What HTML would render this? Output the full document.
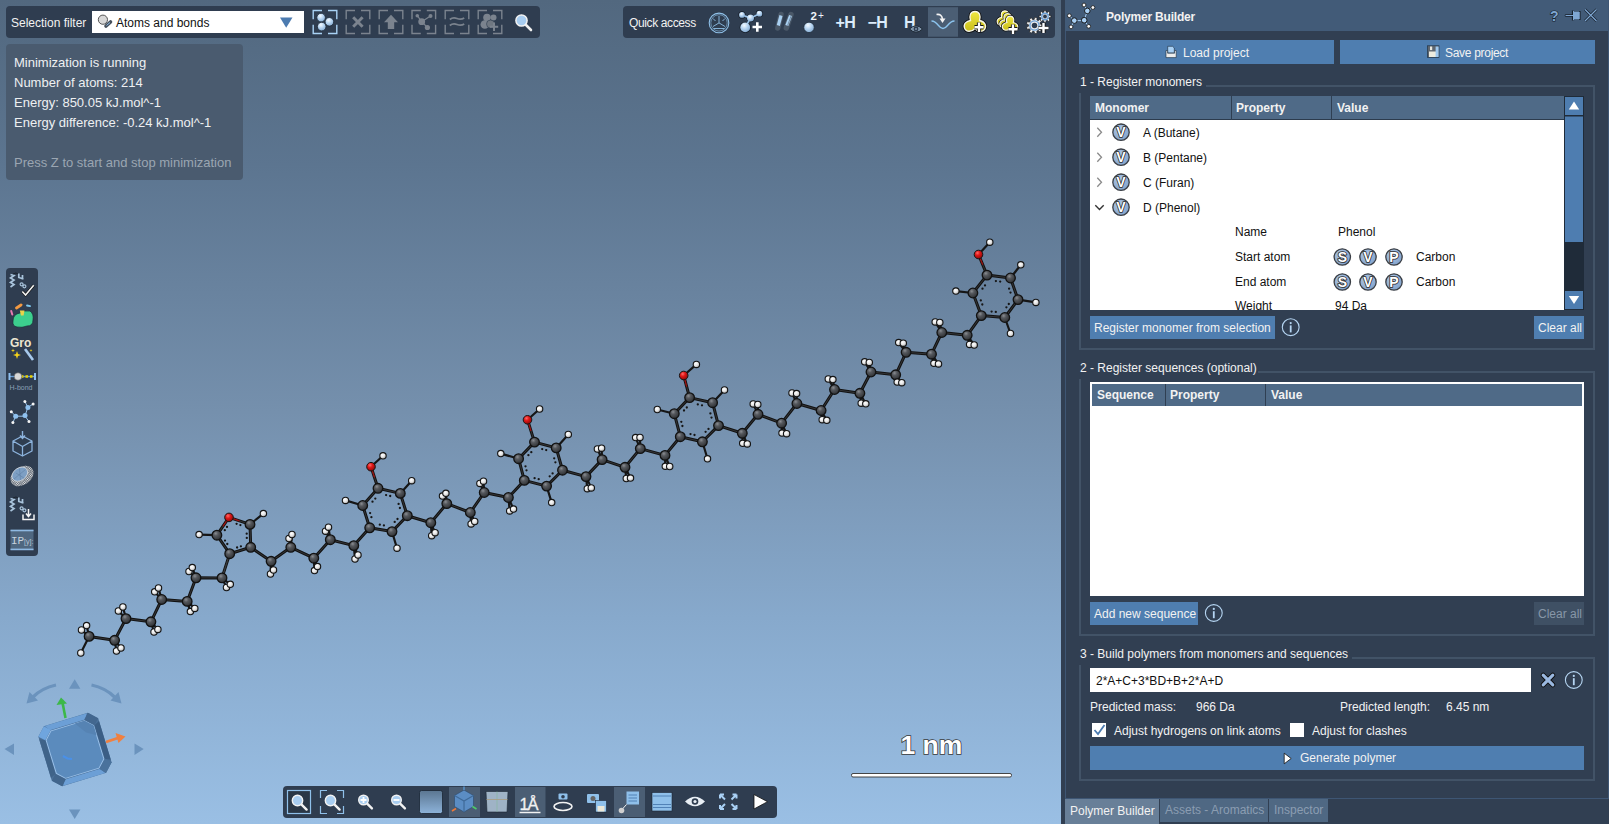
<!DOCTYPE html>
<html><head><meta charset="utf-8">
<style>
html,body{margin:0;padding:0}
body{width:1609px;height:824px;overflow:hidden;position:relative;font-family:"Liberation Sans",sans-serif;background:#313f52}
.a{position:absolute}
.t{position:absolute;white-space:pre;line-height:1}
#vp{left:0;top:0;width:1061px;height:824px;background:linear-gradient(#52687f 0%,#5c7590 20%,#7590ad 50%,#87a9cc 75%,#9abfe4 100%);overflow:hidden}
.tb{background:#2f3d50;border-radius:4px}
.w{color:#f2f2f2}
.btn{background:#4f7eb0}
.hdr{background:#4f6a87}
.frm{border:2px solid #425367}
</style></head><body>
<div id="vp" class="a">
<svg class="a" style="left:0;top:0" width="1061" height="824" viewBox="0 0 1061 824">
<defs><radialGradient id="gC" cx="0.38" cy="0.32" r="0.7"><stop offset="0" stop-color="#8a8d92"/><stop offset="0.35" stop-color="#55585d"/><stop offset="1" stop-color="#2e3033"/></radialGradient><radialGradient id="gH" cx="0.4" cy="0.35" r="0.7"><stop offset="0" stop-color="#ffffff"/><stop offset="0.5" stop-color="#e6e6e6"/><stop offset="1" stop-color="#9a9a9a"/></radialGradient><radialGradient id="gO" cx="0.38" cy="0.32" r="0.7"><stop offset="0" stop-color="#ff6a6a"/><stop offset="0.4" stop-color="#e01818"/><stop offset="1" stop-color="#8a0808"/></radialGradient></defs>
<path d="M222.0 577.9L229.7 553.7M89.1 636.4L114.6 640.3M114.6 640.3L126.0 618.6M126.0 618.6L150.9 621.8M150.9 621.8L161.7 599.5M161.7 599.5L187.2 601.4M187.2 601.4L196.0 577.8M196.0 577.8L222.0 577.9M222.0 577.9L229.7 553.7M229.7 553.7L216.9 535.2M216.9 535.2L229.0 517.4M229.0 517.4L250.0 524.4M250.0 524.4L250.7 547.3M250.7 547.3L229.7 553.7M369.7 527.8L362.7 505.5M362.7 505.5L378.0 488.3M378.0 488.3L400.3 493.4M400.3 493.4L407.3 515.7M407.3 515.7L392.0 531.6M392.0 531.6L369.7 527.8M524.3 480.4L518.6 458.7M518.6 458.7L534.5 442.1M534.5 442.1L556.2 447.9M556.2 447.9L562.5 470.2M562.5 470.2L546.6 486.1M546.6 486.1L524.3 480.4M680.3 436.7L674.3 413.7M674.3 413.7L689.6 397.6M689.6 397.6L712.6 402.7M712.6 402.7L718.5 425.6M718.5 425.6L702.4 441.8M702.4 441.8L680.3 436.7M981.3 315.6L972.9 293.0M972.9 293.0L987.0 275.1M987.0 275.1L1010.5 278.0M1010.5 278.0L1018.0 299.6M1018.0 299.6L1004.8 317.5M1004.8 317.5L981.3 315.6M250.7 547.3L271.1 561.3M271.1 561.3L290.8 547.3M290.8 547.3L313.8 558.2M313.8 558.2L330.3 539.7M330.3 539.7L353.8 545.6M353.8 545.6L369.7 527.8M407.3 515.7L430.8 522.7M430.8 522.7L446.8 503.6M446.8 503.6L470.3 512.5M470.3 512.5L484.2 492.5M484.2 492.5L508.4 497.5M508.4 497.5L524.3 480.4M562.5 470.2L586.0 476.6M586.0 476.6L602.1 459.6M602.1 459.6L625.0 467.3M625.0 467.3L640.3 448.6M640.3 448.6L665.0 455.4M665.0 455.4L680.3 436.7M718.5 425.6L742.3 433.3M742.3 433.3L758.0 414.3M758.0 414.3L781.6 423.2M781.6 423.2L796.9 403.5M796.9 403.5L821.1 410.5M821.1 410.5L834.5 389.5M834.5 389.5L859.9 393.3M859.9 393.3L871.0 372.0M871.0 372.0L895.7 374.8M895.7 374.8L906.1 352.3M906.1 352.3L931.5 354.2M931.5 354.2L941.8 332.5M941.8 332.5L967.2 335.3M967.2 335.3L981.3 315.6M378.0 488.3L371.0 466.7M534.5 442.1L527.5 419.8M689.6 397.6L683.7 375.5M987.0 275.1L978.5 254.5" stroke="#121212" stroke-width="3" fill="none"/>
<path d="M222.0 577.9L229.7 553.7M89.1 636.4L114.6 640.3M114.6 640.3L126.0 618.6M126.0 618.6L150.9 621.8M150.9 621.8L161.7 599.5M161.7 599.5L187.2 601.4M187.2 601.4L196.0 577.8M196.0 577.8L222.0 577.9M222.0 577.9L229.7 553.7M229.7 553.7L216.9 535.2M216.9 535.2L229.0 517.4M229.0 517.4L250.0 524.4M250.0 524.4L250.7 547.3M250.7 547.3L229.7 553.7M369.7 527.8L362.7 505.5M362.7 505.5L378.0 488.3M378.0 488.3L400.3 493.4M400.3 493.4L407.3 515.7M407.3 515.7L392.0 531.6M392.0 531.6L369.7 527.8M524.3 480.4L518.6 458.7M518.6 458.7L534.5 442.1M534.5 442.1L556.2 447.9M556.2 447.9L562.5 470.2M562.5 470.2L546.6 486.1M546.6 486.1L524.3 480.4M680.3 436.7L674.3 413.7M674.3 413.7L689.6 397.6M689.6 397.6L712.6 402.7M712.6 402.7L718.5 425.6M718.5 425.6L702.4 441.8M702.4 441.8L680.3 436.7M981.3 315.6L972.9 293.0M972.9 293.0L987.0 275.1M987.0 275.1L1010.5 278.0M1010.5 278.0L1018.0 299.6M1018.0 299.6L1004.8 317.5M1004.8 317.5L981.3 315.6M250.7 547.3L271.1 561.3M271.1 561.3L290.8 547.3M290.8 547.3L313.8 558.2M313.8 558.2L330.3 539.7M330.3 539.7L353.8 545.6M353.8 545.6L369.7 527.8M407.3 515.7L430.8 522.7M430.8 522.7L446.8 503.6M446.8 503.6L470.3 512.5M470.3 512.5L484.2 492.5M484.2 492.5L508.4 497.5M508.4 497.5L524.3 480.4M562.5 470.2L586.0 476.6M586.0 476.6L602.1 459.6M602.1 459.6L625.0 467.3M625.0 467.3L640.3 448.6M640.3 448.6L665.0 455.4M665.0 455.4L680.3 436.7M718.5 425.6L742.3 433.3M742.3 433.3L758.0 414.3M758.0 414.3L781.6 423.2M781.6 423.2L796.9 403.5M796.9 403.5L821.1 410.5M821.1 410.5L834.5 389.5M834.5 389.5L859.9 393.3M859.9 393.3L871.0 372.0M871.0 372.0L895.7 374.8M895.7 374.8L906.1 352.3M906.1 352.3L931.5 354.2M931.5 354.2L941.8 332.5M941.8 332.5L967.2 335.3M967.2 335.3L981.3 315.6M378.0 488.3L371.0 466.7M534.5 442.1L527.5 419.8M689.6 397.6L683.7 375.5M987.0 275.1L978.5 254.5" stroke="#3c3e40" stroke-width="0.8" fill="none"/>
<path d="M89.1 636.4L81.5 630.0M89.1 636.4L86.6 625.6M89.1 636.4L80.8 653.0M114.6 640.3L116.5 651.0M114.6 640.3L121.0 648.0M126.0 618.6L118.4 611.0M126.0 618.6L122.9 607.0M150.9 621.8L154.0 632.0M150.9 621.8L157.9 629.4M161.7 599.5L154.7 591.8M161.7 599.5L158.5 588.0M187.2 601.4L190.4 611.6M187.2 601.4L194.8 608.4M196.0 577.8L189.0 571.5M196.0 577.8L192.3 567.6M222.0 577.9L226.5 587.5M222.0 577.9L230.3 584.3M216.9 535.2L199.1 534.6M250.0 524.4L263.4 513.6M271.1 561.3L270.5 574.0M271.1 561.3L273.5 570.0M290.8 547.3L289.0 538.5M290.8 547.3L292.0 534.5M313.8 558.2L314.5 570.6M313.8 558.2L317.5 566.6M330.3 539.7L325.5 531.2M330.3 539.7L328.5 527.2M353.8 545.6L355.0 559.0M353.8 545.6L358.0 555.0M362.7 505.5L345.5 500.4M371.0 466.7L383.0 455.8M400.3 493.4L411.7 480.7M392.0 531.6L397.0 548.2M430.8 522.7L431.7 535.7M430.8 522.7L435.1 532.7M446.8 503.6L442.5 496.1M446.8 503.6L445.9 493.3M470.3 512.5L471.1 523.9M470.3 512.5L474.7 521.5M484.2 492.5L479.9 483.4M484.2 492.5L483.5 481.2M508.4 497.5L509.7 510.9M508.4 497.5L513.5 509.1M518.6 458.7L500.8 453.6M527.5 419.8L539.6 409.0M556.2 447.9L568.3 434.5M546.6 486.1L551.7 502.6M586.0 476.6L587.3 488.7M586.0 476.6L591.3 487.9M602.1 459.6L597.4 449.0M602.1 459.6L601.6 448.2M625.0 467.3L626.3 478.5M625.0 467.3L630.5 478.1M640.3 448.6L635.6 437.6M640.3 448.6L640.0 437.4M665.0 455.4L665.3 466.3M665.0 455.4L669.7 466.5M674.3 413.7L657.3 409.5M683.7 375.5L696.4 364.4M712.6 402.7L724.5 390.0M702.4 441.8L707.5 458.8M742.3 433.3L742.7 443.3M742.3 433.3L747.3 443.9M758.0 414.3L753.2 403.9M758.0 414.3L757.8 404.5M781.6 423.2L782.0 433.1M781.6 423.2L786.6 433.7M796.9 403.5L792.0 393.0M796.9 403.5L796.6 393.6M821.1 410.5L822.2 419.7M821.1 410.5L826.8 420.3M834.5 389.5L828.3 379.0M834.5 389.5L832.9 379.6M859.9 393.3L861.2 403.2M859.9 393.3L865.8 403.8M871.0 372.0L864.7 361.8M871.0 372.0L869.3 362.4M895.7 374.8L897.2 382.1M895.7 374.8L901.8 382.7M906.1 352.3L898.7 342.6M906.1 352.3L903.3 343.2M931.5 354.2L933.9 363.3M931.5 354.2L938.5 363.9M941.8 332.5L935.2 321.9M941.8 332.5L939.8 322.5M967.2 335.3L969.6 344.4M967.2 335.3L974.2 345.0M972.9 293.0L955.9 291.1M978.5 254.5L989.8 242.2M1010.5 278.0L1020.8 264.8M1018.0 299.6L1035.9 302.4M1004.8 317.5L1010.5 333.5" stroke="#161616" stroke-width="2.2" fill="none"/>
<path d="M371.0 466.7L374.5 477.5M527.5 419.8L531.0 431.0M683.7 375.5L686.7 386.6M978.5 254.5L982.8 264.8M229.0 517.4L222.9 526.3M229.0 517.4L239.5 520.9" stroke="#a01010" stroke-width="1.2" fill="none"/>
<path d="M227.3 544.0l0.01 0M225.0 540.6l0.01 0M224.8 530.2l0.01 0M227.0 526.9l0.01 0M236.6 523.8l0.01 0M240.4 525.1l0.01 0M246.7 533.7l0.01 0M246.8 537.9l0.01 0M240.9 546.3l0.01 0M237.1 547.5l0.01 0M371.4 517.2l0.01 0M370.1 513.1l0.01 0M372.5 501.7l0.01 0M375.3 498.6l0.01 0M386.1 495.1l0.01 0M390.2 496.0l0.01 0M398.6 503.9l0.01 0M399.9 508.0l0.01 0M397.5 519.0l0.01 0M394.7 521.9l0.01 0M383.9 525.4l0.01 0M379.8 524.7l0.01 0M526.5 470.3l0.01 0M525.5 466.3l0.01 0M528.4 455.2l0.01 0M531.3 452.2l0.01 0M542.2 449.1l0.01 0M546.2 450.1l0.01 0M554.2 458.3l0.01 0M555.4 462.3l0.01 0M552.6 473.4l0.01 0M549.7 476.3l0.01 0M538.7 479.2l0.01 0M534.6 478.2l0.01 0M682.4 426.0l0.01 0M681.3 421.8l0.01 0M684.0 410.5l0.01 0M686.8 407.5l0.01 0M697.8 404.4l0.01 0M702.0 405.3l0.01 0M710.4 413.4l0.01 0M711.5 417.6l0.01 0M708.5 428.9l0.01 0M705.6 431.8l0.01 0M694.5 435.0l0.01 0M690.5 434.1l0.01 0M982.3 304.5l0.01 0M980.8 300.4l0.01 0M982.5 288.7l0.01 0M985.0 285.4l0.01 0M995.9 281.1l0.01 0M1000.2 281.6l0.01 0M1009.1 288.7l0.01 0M1010.5 292.6l0.01 0M1008.8 304.0l0.01 0M1006.4 307.3l0.01 0M995.8 311.9l0.01 0M991.6 311.6l0.01 0" stroke="#161616" stroke-width="2.3" stroke-linecap="round" fill="none"/>
<circle cx="89.1" cy="636.4" r="4.8" fill="url(#gC)" stroke="#121212" stroke-width="1.3"/>
<circle cx="114.6" cy="640.3" r="4.8" fill="url(#gC)" stroke="#121212" stroke-width="1.3"/>
<circle cx="126.0" cy="618.6" r="4.8" fill="url(#gC)" stroke="#121212" stroke-width="1.3"/>
<circle cx="150.9" cy="621.8" r="4.8" fill="url(#gC)" stroke="#121212" stroke-width="1.3"/>
<circle cx="161.7" cy="599.5" r="4.8" fill="url(#gC)" stroke="#121212" stroke-width="1.3"/>
<circle cx="187.2" cy="601.4" r="4.8" fill="url(#gC)" stroke="#121212" stroke-width="1.3"/>
<circle cx="196.0" cy="577.8" r="4.8" fill="url(#gC)" stroke="#121212" stroke-width="1.3"/>
<circle cx="222.0" cy="577.9" r="4.8" fill="url(#gC)" stroke="#121212" stroke-width="1.3"/>
<circle cx="229.7" cy="553.7" r="4.8" fill="url(#gC)" stroke="#121212" stroke-width="1.3"/>
<circle cx="216.9" cy="535.2" r="4.8" fill="url(#gC)" stroke="#121212" stroke-width="1.3"/>
<circle cx="250.0" cy="524.4" r="4.8" fill="url(#gC)" stroke="#121212" stroke-width="1.3"/>
<circle cx="250.7" cy="547.3" r="4.8" fill="url(#gC)" stroke="#121212" stroke-width="1.3"/>
<circle cx="271.1" cy="561.3" r="4.8" fill="url(#gC)" stroke="#121212" stroke-width="1.3"/>
<circle cx="290.8" cy="547.3" r="4.8" fill="url(#gC)" stroke="#121212" stroke-width="1.3"/>
<circle cx="313.8" cy="558.2" r="4.8" fill="url(#gC)" stroke="#121212" stroke-width="1.3"/>
<circle cx="330.3" cy="539.7" r="4.8" fill="url(#gC)" stroke="#121212" stroke-width="1.3"/>
<circle cx="353.8" cy="545.6" r="4.8" fill="url(#gC)" stroke="#121212" stroke-width="1.3"/>
<circle cx="369.7" cy="527.8" r="4.8" fill="url(#gC)" stroke="#121212" stroke-width="1.3"/>
<circle cx="362.7" cy="505.5" r="4.8" fill="url(#gC)" stroke="#121212" stroke-width="1.3"/>
<circle cx="378.0" cy="488.3" r="4.8" fill="url(#gC)" stroke="#121212" stroke-width="1.3"/>
<circle cx="400.3" cy="493.4" r="4.8" fill="url(#gC)" stroke="#121212" stroke-width="1.3"/>
<circle cx="407.3" cy="515.7" r="4.8" fill="url(#gC)" stroke="#121212" stroke-width="1.3"/>
<circle cx="392.0" cy="531.6" r="4.8" fill="url(#gC)" stroke="#121212" stroke-width="1.3"/>
<circle cx="430.8" cy="522.7" r="4.8" fill="url(#gC)" stroke="#121212" stroke-width="1.3"/>
<circle cx="446.8" cy="503.6" r="4.8" fill="url(#gC)" stroke="#121212" stroke-width="1.3"/>
<circle cx="470.3" cy="512.5" r="4.8" fill="url(#gC)" stroke="#121212" stroke-width="1.3"/>
<circle cx="484.2" cy="492.5" r="4.8" fill="url(#gC)" stroke="#121212" stroke-width="1.3"/>
<circle cx="508.4" cy="497.5" r="4.8" fill="url(#gC)" stroke="#121212" stroke-width="1.3"/>
<circle cx="524.3" cy="480.4" r="4.8" fill="url(#gC)" stroke="#121212" stroke-width="1.3"/>
<circle cx="518.6" cy="458.7" r="4.8" fill="url(#gC)" stroke="#121212" stroke-width="1.3"/>
<circle cx="534.5" cy="442.1" r="4.8" fill="url(#gC)" stroke="#121212" stroke-width="1.3"/>
<circle cx="556.2" cy="447.9" r="4.8" fill="url(#gC)" stroke="#121212" stroke-width="1.3"/>
<circle cx="562.5" cy="470.2" r="4.8" fill="url(#gC)" stroke="#121212" stroke-width="1.3"/>
<circle cx="546.6" cy="486.1" r="4.8" fill="url(#gC)" stroke="#121212" stroke-width="1.3"/>
<circle cx="586.0" cy="476.6" r="4.8" fill="url(#gC)" stroke="#121212" stroke-width="1.3"/>
<circle cx="602.1" cy="459.6" r="4.8" fill="url(#gC)" stroke="#121212" stroke-width="1.3"/>
<circle cx="625.0" cy="467.3" r="4.8" fill="url(#gC)" stroke="#121212" stroke-width="1.3"/>
<circle cx="640.3" cy="448.6" r="4.8" fill="url(#gC)" stroke="#121212" stroke-width="1.3"/>
<circle cx="665.0" cy="455.4" r="4.8" fill="url(#gC)" stroke="#121212" stroke-width="1.3"/>
<circle cx="680.3" cy="436.7" r="4.8" fill="url(#gC)" stroke="#121212" stroke-width="1.3"/>
<circle cx="674.3" cy="413.7" r="4.8" fill="url(#gC)" stroke="#121212" stroke-width="1.3"/>
<circle cx="689.6" cy="397.6" r="4.8" fill="url(#gC)" stroke="#121212" stroke-width="1.3"/>
<circle cx="712.6" cy="402.7" r="4.8" fill="url(#gC)" stroke="#121212" stroke-width="1.3"/>
<circle cx="718.5" cy="425.6" r="4.8" fill="url(#gC)" stroke="#121212" stroke-width="1.3"/>
<circle cx="702.4" cy="441.8" r="4.8" fill="url(#gC)" stroke="#121212" stroke-width="1.3"/>
<circle cx="742.3" cy="433.3" r="4.8" fill="url(#gC)" stroke="#121212" stroke-width="1.3"/>
<circle cx="758.0" cy="414.3" r="4.8" fill="url(#gC)" stroke="#121212" stroke-width="1.3"/>
<circle cx="781.6" cy="423.2" r="4.8" fill="url(#gC)" stroke="#121212" stroke-width="1.3"/>
<circle cx="796.9" cy="403.5" r="4.8" fill="url(#gC)" stroke="#121212" stroke-width="1.3"/>
<circle cx="821.1" cy="410.5" r="4.8" fill="url(#gC)" stroke="#121212" stroke-width="1.3"/>
<circle cx="834.5" cy="389.5" r="4.8" fill="url(#gC)" stroke="#121212" stroke-width="1.3"/>
<circle cx="859.9" cy="393.3" r="4.8" fill="url(#gC)" stroke="#121212" stroke-width="1.3"/>
<circle cx="871.0" cy="372.0" r="4.8" fill="url(#gC)" stroke="#121212" stroke-width="1.3"/>
<circle cx="895.7" cy="374.8" r="4.8" fill="url(#gC)" stroke="#121212" stroke-width="1.3"/>
<circle cx="906.1" cy="352.3" r="4.8" fill="url(#gC)" stroke="#121212" stroke-width="1.3"/>
<circle cx="931.5" cy="354.2" r="4.8" fill="url(#gC)" stroke="#121212" stroke-width="1.3"/>
<circle cx="941.8" cy="332.5" r="4.8" fill="url(#gC)" stroke="#121212" stroke-width="1.3"/>
<circle cx="967.2" cy="335.3" r="4.8" fill="url(#gC)" stroke="#121212" stroke-width="1.3"/>
<circle cx="981.3" cy="315.6" r="4.8" fill="url(#gC)" stroke="#121212" stroke-width="1.3"/>
<circle cx="972.9" cy="293.0" r="4.8" fill="url(#gC)" stroke="#121212" stroke-width="1.3"/>
<circle cx="987.0" cy="275.1" r="4.8" fill="url(#gC)" stroke="#121212" stroke-width="1.3"/>
<circle cx="1010.5" cy="278.0" r="4.8" fill="url(#gC)" stroke="#121212" stroke-width="1.3"/>
<circle cx="1018.0" cy="299.6" r="4.8" fill="url(#gC)" stroke="#121212" stroke-width="1.3"/>
<circle cx="1004.8" cy="317.5" r="4.8" fill="url(#gC)" stroke="#121212" stroke-width="1.3"/>
<circle cx="229.0" cy="517.4" r="4.3" fill="url(#gO)" stroke="#151515" stroke-width="1"/>
<circle cx="371.0" cy="466.7" r="4.3" fill="url(#gO)" stroke="#151515" stroke-width="1"/>
<circle cx="527.5" cy="419.8" r="4.3" fill="url(#gO)" stroke="#151515" stroke-width="1"/>
<circle cx="683.7" cy="375.5" r="4.3" fill="url(#gO)" stroke="#151515" stroke-width="1"/>
<circle cx="978.5" cy="254.5" r="4.3" fill="url(#gO)" stroke="#151515" stroke-width="1"/>
<circle cx="81.5" cy="630.0" r="3.2" fill="url(#gH)" stroke="#141414" stroke-width="1.1"/>
<circle cx="86.6" cy="625.6" r="3.2" fill="url(#gH)" stroke="#141414" stroke-width="1.1"/>
<circle cx="80.8" cy="653.0" r="3.2" fill="url(#gH)" stroke="#141414" stroke-width="1.1"/>
<circle cx="116.5" cy="651.0" r="3.2" fill="url(#gH)" stroke="#141414" stroke-width="1.1"/>
<circle cx="121.0" cy="648.0" r="3.2" fill="url(#gH)" stroke="#141414" stroke-width="1.1"/>
<circle cx="118.4" cy="611.0" r="3.2" fill="url(#gH)" stroke="#141414" stroke-width="1.1"/>
<circle cx="122.9" cy="607.0" r="3.2" fill="url(#gH)" stroke="#141414" stroke-width="1.1"/>
<circle cx="154.0" cy="632.0" r="3.2" fill="url(#gH)" stroke="#141414" stroke-width="1.1"/>
<circle cx="157.9" cy="629.4" r="3.2" fill="url(#gH)" stroke="#141414" stroke-width="1.1"/>
<circle cx="154.7" cy="591.8" r="3.2" fill="url(#gH)" stroke="#141414" stroke-width="1.1"/>
<circle cx="158.5" cy="588.0" r="3.2" fill="url(#gH)" stroke="#141414" stroke-width="1.1"/>
<circle cx="190.4" cy="611.6" r="3.2" fill="url(#gH)" stroke="#141414" stroke-width="1.1"/>
<circle cx="194.8" cy="608.4" r="3.2" fill="url(#gH)" stroke="#141414" stroke-width="1.1"/>
<circle cx="189.0" cy="571.5" r="3.2" fill="url(#gH)" stroke="#141414" stroke-width="1.1"/>
<circle cx="192.3" cy="567.6" r="3.2" fill="url(#gH)" stroke="#141414" stroke-width="1.1"/>
<circle cx="226.5" cy="587.5" r="3.2" fill="url(#gH)" stroke="#141414" stroke-width="1.1"/>
<circle cx="230.3" cy="584.3" r="3.2" fill="url(#gH)" stroke="#141414" stroke-width="1.1"/>
<circle cx="199.1" cy="534.6" r="3.2" fill="url(#gH)" stroke="#141414" stroke-width="1.1"/>
<circle cx="263.4" cy="513.6" r="3.2" fill="url(#gH)" stroke="#141414" stroke-width="1.1"/>
<circle cx="270.5" cy="574.0" r="3.2" fill="url(#gH)" stroke="#141414" stroke-width="1.1"/>
<circle cx="273.5" cy="570.0" r="3.2" fill="url(#gH)" stroke="#141414" stroke-width="1.1"/>
<circle cx="289.0" cy="538.5" r="3.2" fill="url(#gH)" stroke="#141414" stroke-width="1.1"/>
<circle cx="292.0" cy="534.5" r="3.2" fill="url(#gH)" stroke="#141414" stroke-width="1.1"/>
<circle cx="314.5" cy="570.6" r="3.2" fill="url(#gH)" stroke="#141414" stroke-width="1.1"/>
<circle cx="317.5" cy="566.6" r="3.2" fill="url(#gH)" stroke="#141414" stroke-width="1.1"/>
<circle cx="325.5" cy="531.2" r="3.2" fill="url(#gH)" stroke="#141414" stroke-width="1.1"/>
<circle cx="328.5" cy="527.2" r="3.2" fill="url(#gH)" stroke="#141414" stroke-width="1.1"/>
<circle cx="355.0" cy="559.0" r="3.2" fill="url(#gH)" stroke="#141414" stroke-width="1.1"/>
<circle cx="358.0" cy="555.0" r="3.2" fill="url(#gH)" stroke="#141414" stroke-width="1.1"/>
<circle cx="345.5" cy="500.4" r="3.2" fill="url(#gH)" stroke="#141414" stroke-width="1.1"/>
<circle cx="383.0" cy="455.8" r="3.2" fill="url(#gH)" stroke="#141414" stroke-width="1.1"/>
<circle cx="411.7" cy="480.7" r="3.2" fill="url(#gH)" stroke="#141414" stroke-width="1.1"/>
<circle cx="397.0" cy="548.2" r="3.2" fill="url(#gH)" stroke="#141414" stroke-width="1.1"/>
<circle cx="431.7" cy="535.7" r="3.2" fill="url(#gH)" stroke="#141414" stroke-width="1.1"/>
<circle cx="435.1" cy="532.7" r="3.2" fill="url(#gH)" stroke="#141414" stroke-width="1.1"/>
<circle cx="442.5" cy="496.1" r="3.2" fill="url(#gH)" stroke="#141414" stroke-width="1.1"/>
<circle cx="445.9" cy="493.3" r="3.2" fill="url(#gH)" stroke="#141414" stroke-width="1.1"/>
<circle cx="471.1" cy="523.9" r="3.2" fill="url(#gH)" stroke="#141414" stroke-width="1.1"/>
<circle cx="474.7" cy="521.5" r="3.2" fill="url(#gH)" stroke="#141414" stroke-width="1.1"/>
<circle cx="479.9" cy="483.4" r="3.2" fill="url(#gH)" stroke="#141414" stroke-width="1.1"/>
<circle cx="483.5" cy="481.2" r="3.2" fill="url(#gH)" stroke="#141414" stroke-width="1.1"/>
<circle cx="509.7" cy="510.9" r="3.2" fill="url(#gH)" stroke="#141414" stroke-width="1.1"/>
<circle cx="513.5" cy="509.1" r="3.2" fill="url(#gH)" stroke="#141414" stroke-width="1.1"/>
<circle cx="500.8" cy="453.6" r="3.2" fill="url(#gH)" stroke="#141414" stroke-width="1.1"/>
<circle cx="539.6" cy="409.0" r="3.2" fill="url(#gH)" stroke="#141414" stroke-width="1.1"/>
<circle cx="568.3" cy="434.5" r="3.2" fill="url(#gH)" stroke="#141414" stroke-width="1.1"/>
<circle cx="551.7" cy="502.6" r="3.2" fill="url(#gH)" stroke="#141414" stroke-width="1.1"/>
<circle cx="587.3" cy="488.7" r="3.2" fill="url(#gH)" stroke="#141414" stroke-width="1.1"/>
<circle cx="591.3" cy="487.9" r="3.2" fill="url(#gH)" stroke="#141414" stroke-width="1.1"/>
<circle cx="597.4" cy="449.0" r="3.2" fill="url(#gH)" stroke="#141414" stroke-width="1.1"/>
<circle cx="601.6" cy="448.2" r="3.2" fill="url(#gH)" stroke="#141414" stroke-width="1.1"/>
<circle cx="626.3" cy="478.5" r="3.2" fill="url(#gH)" stroke="#141414" stroke-width="1.1"/>
<circle cx="630.5" cy="478.1" r="3.2" fill="url(#gH)" stroke="#141414" stroke-width="1.1"/>
<circle cx="635.6" cy="437.6" r="3.2" fill="url(#gH)" stroke="#141414" stroke-width="1.1"/>
<circle cx="640.0" cy="437.4" r="3.2" fill="url(#gH)" stroke="#141414" stroke-width="1.1"/>
<circle cx="665.3" cy="466.3" r="3.2" fill="url(#gH)" stroke="#141414" stroke-width="1.1"/>
<circle cx="669.7" cy="466.5" r="3.2" fill="url(#gH)" stroke="#141414" stroke-width="1.1"/>
<circle cx="657.3" cy="409.5" r="3.2" fill="url(#gH)" stroke="#141414" stroke-width="1.1"/>
<circle cx="696.4" cy="364.4" r="3.2" fill="url(#gH)" stroke="#141414" stroke-width="1.1"/>
<circle cx="724.5" cy="390.0" r="3.2" fill="url(#gH)" stroke="#141414" stroke-width="1.1"/>
<circle cx="707.5" cy="458.8" r="3.2" fill="url(#gH)" stroke="#141414" stroke-width="1.1"/>
<circle cx="742.7" cy="443.3" r="3.2" fill="url(#gH)" stroke="#141414" stroke-width="1.1"/>
<circle cx="747.3" cy="443.9" r="3.2" fill="url(#gH)" stroke="#141414" stroke-width="1.1"/>
<circle cx="753.2" cy="403.9" r="3.2" fill="url(#gH)" stroke="#141414" stroke-width="1.1"/>
<circle cx="757.8" cy="404.5" r="3.2" fill="url(#gH)" stroke="#141414" stroke-width="1.1"/>
<circle cx="782.0" cy="433.1" r="3.2" fill="url(#gH)" stroke="#141414" stroke-width="1.1"/>
<circle cx="786.6" cy="433.7" r="3.2" fill="url(#gH)" stroke="#141414" stroke-width="1.1"/>
<circle cx="792.0" cy="393.0" r="3.2" fill="url(#gH)" stroke="#141414" stroke-width="1.1"/>
<circle cx="796.6" cy="393.6" r="3.2" fill="url(#gH)" stroke="#141414" stroke-width="1.1"/>
<circle cx="822.2" cy="419.7" r="3.2" fill="url(#gH)" stroke="#141414" stroke-width="1.1"/>
<circle cx="826.8" cy="420.3" r="3.2" fill="url(#gH)" stroke="#141414" stroke-width="1.1"/>
<circle cx="828.3" cy="379.0" r="3.2" fill="url(#gH)" stroke="#141414" stroke-width="1.1"/>
<circle cx="832.9" cy="379.6" r="3.2" fill="url(#gH)" stroke="#141414" stroke-width="1.1"/>
<circle cx="861.2" cy="403.2" r="3.2" fill="url(#gH)" stroke="#141414" stroke-width="1.1"/>
<circle cx="865.8" cy="403.8" r="3.2" fill="url(#gH)" stroke="#141414" stroke-width="1.1"/>
<circle cx="864.7" cy="361.8" r="3.2" fill="url(#gH)" stroke="#141414" stroke-width="1.1"/>
<circle cx="869.3" cy="362.4" r="3.2" fill="url(#gH)" stroke="#141414" stroke-width="1.1"/>
<circle cx="897.2" cy="382.1" r="3.2" fill="url(#gH)" stroke="#141414" stroke-width="1.1"/>
<circle cx="901.8" cy="382.7" r="3.2" fill="url(#gH)" stroke="#141414" stroke-width="1.1"/>
<circle cx="898.7" cy="342.6" r="3.2" fill="url(#gH)" stroke="#141414" stroke-width="1.1"/>
<circle cx="903.3" cy="343.2" r="3.2" fill="url(#gH)" stroke="#141414" stroke-width="1.1"/>
<circle cx="933.9" cy="363.3" r="3.2" fill="url(#gH)" stroke="#141414" stroke-width="1.1"/>
<circle cx="938.5" cy="363.9" r="3.2" fill="url(#gH)" stroke="#141414" stroke-width="1.1"/>
<circle cx="935.2" cy="321.9" r="3.2" fill="url(#gH)" stroke="#141414" stroke-width="1.1"/>
<circle cx="939.8" cy="322.5" r="3.2" fill="url(#gH)" stroke="#141414" stroke-width="1.1"/>
<circle cx="969.6" cy="344.4" r="3.2" fill="url(#gH)" stroke="#141414" stroke-width="1.1"/>
<circle cx="974.2" cy="345.0" r="3.2" fill="url(#gH)" stroke="#141414" stroke-width="1.1"/>
<circle cx="955.9" cy="291.1" r="3.2" fill="url(#gH)" stroke="#141414" stroke-width="1.1"/>
<circle cx="989.8" cy="242.2" r="3.2" fill="url(#gH)" stroke="#141414" stroke-width="1.1"/>
<circle cx="1020.8" cy="264.8" r="3.2" fill="url(#gH)" stroke="#141414" stroke-width="1.1"/>
<circle cx="1035.9" cy="302.4" r="3.2" fill="url(#gH)" stroke="#141414" stroke-width="1.1"/>
<circle cx="1010.5" cy="333.5" r="3.2" fill="url(#gH)" stroke="#141414" stroke-width="1.1"/>
</svg>
  <!-- selection toolbar -->
  <div class="a tb" style="left:6px;top:6px;width:534px;height:32px"></div>
  <div class="t w" style="left:11px;top:16.6px;font-size:12px">Selection filter</div>
  <div class="a" style="left:92px;top:11px;width:212px;height:22px;background:#fff"></div>
  <div class="t" style="left:116px;top:16.6px;font-size:12px;color:#111">Atoms and bonds</div>
  <!-- info panel -->
  <div class="a" style="left:6px;top:44px;width:237px;height:136px;background:#4a5b6f;border-radius:4px"></div>
  <div class="t" style="left:14px;top:56.3px;font-size:13px;color:#eef0f2">Minimization is running</div>
  <div class="t" style="left:14px;top:76.3px;font-size:13px;color:#eef0f2">Number of atoms: 214</div>
  <div class="t" style="left:14px;top:96.3px;font-size:13px;color:#eef0f2">Energy: 850.05 kJ.mol^-1</div>
  <div class="t" style="left:14px;top:116.3px;font-size:13px;color:#eef0f2">Energy difference: -0.24 kJ.mol^-1</div>
  <div class="t" style="left:14px;top:156px;font-size:13px;color:#9ba6b2">Press Z to start and stop minimization</div>
  <!-- quick access -->
  <div class="a tb" style="left:623px;top:6px;width:432px;height:32px"></div>
  <div class="t w" style="left:629px;top:16.5px;font-size:12px;letter-spacing:-0.38px">Quick access</div>
  <!-- left vertical toolbar -->
  <div class="a tb" style="left:6px;top:268px;width:32px;height:288px"></div>
  <!-- bottom toolbar -->
  <div class="a tb" style="left:283px;top:786px;width:494px;height:32px"></div>
  <!-- scale -->
</div>
<!-- separator -->
<div class="a" style="left:1061px;top:0;width:4px;height:824px;background:#313f52"></div>
<!-- right panel -->
<div class="a" style="left:1065px;top:0;width:544px;height:31px;background:#425b78"></div>
<div class="a" style="left:1065px;top:31px;width:1px;height:768px;background:#3e5674"></div><div class="a" style="left:1608px;top:0;width:1px;height:799px;background:#3e5674"></div><div class="a" style="left:1065px;top:798px;width:544px;height:1px;background:#3e5674"></div>
<div class="t w" style="left:1106px;top:11px;font-size:12px;font-weight:700;letter-spacing:-0.2px">Polymer Builder</div>
<div class="a btn" style="left:1079px;top:40px;width:255px;height:24px"></div>
<div class="a btn" style="left:1340px;top:40px;width:255px;height:24px"></div>
<div class="t w" style="left:1183px;top:47px;font-size:12px">Load project</div>
<div class="t w" style="left:1445px;top:47px;font-size:12px;letter-spacing:-0.3px">Save project</div>

<!-- group 1 -->
<div class="a frm" style="left:1079px;top:85px;width:512px;height:261px"></div>
<div class="a" style="left:1075px;top:75px;width:131px;height:18px;background:#313f52"></div>
<div class="t w" style="left:1080px;top:76px;font-size:12px">1 - Register monomers</div>
<div class="a" style="left:1090px;top:96px;width:474px;height:214px;background:#fff"></div>
<div class="a hdr" style="left:1090px;top:96px;width:474px;height:24px;box-sizing:border-box;border-bottom:1px solid #2c3b4d"></div>
<div class="t w" style="left:1095px;top:102px;font-size:12px;font-weight:700">Monomer</div>
<div class="t w" style="left:1236px;top:102px;font-size:12px;font-weight:700">Property</div>
<div class="t w" style="left:1337px;top:102px;font-size:12px;font-weight:700">Value</div>
<div class="t" style="left:1143px;top:127.2px;font-size:12px;color:#111">A (Butane)</div>
<div class="t" style="left:1143px;top:152.2px;font-size:12px;color:#111">B (Pentane)</div>
<div class="t" style="left:1143px;top:177.2px;font-size:12px;color:#111">C (Furan)</div>
<div class="t" style="left:1143px;top:202.2px;font-size:12px;color:#111">D (Phenol)</div>
<div class="t" style="left:1235px;top:226.2px;font-size:12px;color:#111">Name</div>
<div class="t" style="left:1338px;top:226.2px;font-size:12px;color:#111">Phenol</div>
<div class="t" style="left:1235px;top:251.4px;font-size:12px;color:#111">Start atom</div>
<div class="t" style="left:1416px;top:251.4px;font-size:12px;color:#111">Carbon</div>
<div class="t" style="left:1235px;top:276.3px;font-size:12px;color:#111">End atom</div>
<div class="t" style="left:1416px;top:276.3px;font-size:12px;color:#111">Carbon</div>
<div class="a" style="left:1090px;top:296px;width:474px;height:14px;overflow:hidden"><div class="t" style="left:145px;top:4px;font-size:12px;color:#111">Weight</div><div class="t" style="left:245px;top:4px;font-size:12px;color:#111">94 Da</div></div>
<div class="a" style="left:1231px;top:96px;width:1px;height:24px;background:#2f3f52"></div>
<div class="a" style="left:1331px;top:96px;width:1px;height:24px;background:#2f3f52"></div>

<div class="a btn" style="left:1090px;top:316px;width:185px;height:23px"></div>
<div class="t w" style="left:1094px;top:322px;font-size:12px">Register monomer from selection</div>
<div class="a btn" style="left:1534px;top:316px;width:50px;height:23px"></div>
<div class="t w" style="left:1538px;top:322px;font-size:12px">Clear all</div>

<!-- group 2 -->
<div class="a frm" style="left:1079px;top:371px;width:512px;height:261px"></div>
<div class="a" style="left:1075px;top:361px;width:183px;height:18px;background:#313f52"></div>
<div class="t w" style="left:1080px;top:362px;font-size:12px">2 - Register sequences (optional)</div>
<div class="a" style="left:1090px;top:382px;width:494px;height:214px;background:#fff"></div>
<div class="a hdr" style="left:1092px;top:384px;width:490px;height:22px"></div>
<div class="t w" style="left:1097px;top:389px;font-size:12px;font-weight:700">Sequence</div>
<div class="t w" style="left:1170px;top:389px;font-size:12px;font-weight:700">Property</div>
<div class="t w" style="left:1271px;top:389px;font-size:12px;font-weight:700">Value</div>
<div class="a" style="left:1165px;top:384px;width:1px;height:22px;background:#2f3f52"></div>
<div class="a" style="left:1265px;top:384px;width:1px;height:22px;background:#2f3f52"></div>
<div class="a btn" style="left:1090px;top:602px;width:108px;height:23px"></div>
<div class="t w" style="left:1094px;top:608px;font-size:12px">Add new sequence</div>
<div class="a" style="left:1534px;top:602px;width:50px;height:23px;background:#3f5064"></div>
<div class="t" style="left:1538px;top:608px;font-size:12px;color:#8797a8">Clear all</div>

<!-- group 3 -->
<div class="a frm" style="left:1079px;top:657px;width:512px;height:120px"></div>
<div class="a" style="left:1075px;top:647px;width:277px;height:18px;background:#313f52"></div>
<div class="t w" style="left:1080px;top:648px;font-size:12px">3 - Build polymers from monomers and sequences</div>
<div class="a" style="left:1090px;top:668px;width:441px;height:24px;background:#fff"></div>
<div class="t" style="left:1096px;top:674.7px;font-size:12px;color:#111">2*A+C+3*BD+B+2*A+D</div>
<div class="t w" style="left:1090px;top:700.7px;font-size:12px">Predicted mass:</div>
<div class="t w" style="left:1196px;top:700.7px;font-size:12px">966 Da</div>
<div class="t w" style="left:1340px;top:700.7px;font-size:12px">Predicted length:</div>
<div class="t w" style="left:1446px;top:700.7px;font-size:12px">6.45 nm</div>
<div class="a" style="left:1092px;top:723px;width:14px;height:14px;background:#fff"></div>
<div class="t w" style="left:1114px;top:724.8px;font-size:12px">Adjust hydrogens on link atoms</div>
<div class="a" style="left:1290px;top:723px;width:14px;height:14px;background:#fff"></div>
<div class="t w" style="left:1312px;top:724.8px;font-size:12px">Adjust for clashes</div>
<div class="a btn" style="left:1090px;top:746px;width:494px;height:24px"></div>
<div class="t w" style="left:1300px;top:752px;font-size:12px">Generate polymer</div>

<!-- tabs -->
<div class="a" style="left:1065px;top:799px;width:94px;height:25px;background:#687f98"></div>
<div class="a" style="left:1160px;top:799px;width:108px;height:22.5px;background:#4f6883"></div>
<div class="a" style="left:1269px;top:799px;width:59px;height:22.5px;background:#4f6883"></div>
<div class="t" style="left:1070px;top:804.8px;font-size:12px;color:#f2f2f2">Polymer Builder</div>
<div class="t" style="left:1165px;top:803.5px;font-size:12px;color:#8b9db2">Assets - Aromatics</div>
<div class="t" style="left:1274px;top:803.5px;font-size:12px;color:#8b9db2">Inspector</div>
<svg class="a" style="left:0;top:0" width="1609" height="824" viewBox="0 0 1609 824">
<defs>
<radialGradient id="tb1" cx="0.4" cy="0.3" r="0.75"><stop offset="0" stop-color="#f4faff"/><stop offset="0.45" stop-color="#b9d6f2"/><stop offset="1" stop-color="#7fa7cf"/></radialGradient>
<linearGradient id="tsq" x1="0" y1="0" x2="0" y2="1"><stop offset="0" stop-color="#5b7691"/><stop offset="1" stop-color="#8db3da"/></linearGradient>
<linearGradient id="cube" x1="0" y1="0" x2="1" y2="1"><stop offset="0" stop-color="#6c9fd4"/><stop offset="1" stop-color="#4f7fb4"/></linearGradient>
</defs>
<path d="M10.5 274.5L14 275.5L10.5 278L14 280L10.5 282.5L14 284.5L10.5 287" stroke="#a9c4dc" stroke-width="1.7" fill="none"/><path d="M13 274Q16 272 18.5 274" stroke="#141c24" stroke-width="0.8" fill="none"/><path d="M18.8 273.5V277.5L23.5 279M22.5 275V279.5" stroke="#a9c4dc" stroke-width="1.7" fill="none"/><circle cx="21.6" cy="284.3" r="1.5" fill="none" stroke="#a9c4dc" stroke-width="1.2"/><circle cx="24.4" cy="286.3" r="1.5" fill="none" stroke="#a9c4dc" stroke-width="1.2"/>
<path d="M22.3 291.5L25.6 295L33.7 285.3" stroke="#111" stroke-width="2.8" fill="none"/><path d="M22.3 291.5L25.6 295L33.7 285.3" stroke="#f4f4f4" stroke-width="1.6" fill="none"/>
<path d="M13 321Q13 314 20 313Q24 310 30 311Q34 314 33 320Q33 326 27 326Q22 328 17 327Q12 326 13 321Z" fill="#3ccf8e" stroke="#1b2a36" stroke-width="0.7"/>
<path d="M16.5 308L21 305" stroke="#f39a42" stroke-width="2.8" stroke-linecap="round"/><path d="M11.2 311L12.3 314.5" stroke="#e87ab0" stroke-width="2" stroke-linecap="round"/><path d="M27 305.5L30 306.2" stroke="#7cc8f0" stroke-width="1.8" stroke-linecap="round"/><path d="M19.8 310.5H24.5L23.6 315.5H21Z" fill="#e8d44a"/>
<text x="10" y="346.8" font-family="Liberation Sans" font-weight="700" font-size="12" fill="#ece6d2">Gro</text>
<path d="M17 351L18 354L21 355L18 356L17 359L16 356L13 355L16 354Z" fill="#f4d21a"/><path d="M13 348.5L13.5 350L15 350.5L13.5 351L13 352.5L12.5 351L11 350.5L12.5 350Z" fill="#f4d21a"/><path d="M31 349L31.4 350L32.5 350.4L31.4 350.8L31 352L30.6 350.8L29.5 350.4L30.6 350Z" fill="#f4d21a"/>
<path d="M25 349L33 360" stroke="#a7c9ec" stroke-width="2.6"/>
<path d="M10 376.5H35" stroke="#6aa0d8" stroke-width="1.4"/><path d="M21 376.5H33" stroke="#e8d000" stroke-width="2.5" stroke-dasharray="2.5 2"/>
<path d="M9.5 373V380M35 373V380" stroke="#8ec0f0" stroke-width="2"/>
<circle cx="18" cy="376.5" r="3.8" fill="#d8d8d8" stroke="#555" stroke-width="0.6"/>
<text x="9.5" y="389.5" font-family="Liberation Sans" font-size="7" fill="#8ba0b6">H-bond</text>
<path d="M11.3 411.7L15.7 416.2L12.9 422.5M15.7 416.2H25L29 421.4M25 415.6L27.9 407.4L24.9 401.6M27.9 407.4L33.1 404" stroke="#9cc4ea" stroke-width="1" fill="none"/>
<circle cx="15.7" cy="416.2" r="2.5" fill="#8ec0ee"/>
<circle cx="25" cy="415.6" r="2.5" fill="#8ec0ee"/>
<circle cx="27.9" cy="407.4" r="2.5" fill="#8ec0ee"/>
<circle cx="11.3" cy="411.7" r="1.5" fill="#f4f4f4"/>
<circle cx="12.9" cy="422.5" r="1.5" fill="#f4f4f4"/>
<circle cx="24.9" cy="401.6" r="1.5" fill="#f4f4f4"/>
<circle cx="33.1" cy="404" r="1.5" fill="#f4f4f4"/>
<circle cx="29" cy="421.4" r="1.5" fill="#f4f4f4"/>
<path d="M13 441L22.5 446.5L32 441L22.5 436Z M13 441V451L22.5 456L32 451V441M22.5 446.5V456" stroke="#8db4de" stroke-width="1.3" fill="none" stroke-linejoin="round"/>
<path d="M22.5 431V438M20 435.5L22.5 438.5L25 435.5" stroke="#8db4de" stroke-width="1.4" fill="none"/>
<defs><pattern id="mesh" width="1.6" height="1.6" patternUnits="userSpaceOnUse"><rect width="1.6" height="1.6" fill="#5a6470"/><rect width="1" height="1" fill="#f0f0f0"/></pattern></defs>
<ellipse cx="22" cy="476" rx="12.5" ry="9" transform="rotate(-35 22 476)" fill="url(#mesh)"/>
<ellipse cx="19.8" cy="474.2" rx="8.6" ry="6.2" transform="rotate(-35 19.8 474.2)" fill="#7d9fc4" stroke="#e8e8e8" stroke-width="0.6"/>
<path d="M14 479L25.5 469.5M16 473L24 478M19.5 468.5L20.5 480" stroke="#5a7a9e" stroke-width="0.5"/>
<path d="M10.5 498.5L14 499.5L10.5 502L14 504L10.5 506.5L14 508.5L10.5 511" stroke="#a9c4dc" stroke-width="1.7" fill="none"/><path d="M13 498Q16 496 18.5 498" stroke="#141c24" stroke-width="0.8" fill="none"/><path d="M18.8 497.5V501.5L23.5 503M22.5 499V503.5" stroke="#a9c4dc" stroke-width="1.7" fill="none"/><circle cx="21.6" cy="508.3" r="1.5" fill="none" stroke="#a9c4dc" stroke-width="1.2"/><circle cx="24.4" cy="510.3" r="1.5" fill="none" stroke="#a9c4dc" stroke-width="1.2"/>
<path d="M23 514.5V519.5H34V514.5M28.5 509V516M26 513.5L28.5 516.5L31 513.5" stroke="#f4f4f4" stroke-width="1.5" fill="none"/>
<rect x="10.5" y="529.7" width="23" height="20.5" fill="#4f6780"/><rect x="10.5" y="529.7" width="23" height="1.6" fill="#8fb9e2"/><rect x="10.5" y="548.6" width="23" height="1.6" fill="#8fb9e2"/>
<text x="11" y="544" font-family="Liberation Mono" font-size="11" fill="#c8d2dc">IP</text><text x="24" y="543.5" font-family="Liberation Sans" font-size="7" fill="#b5c5d5">[y]:</text>
<rect x="287.5" y="790.5" width="23" height="23" fill="#2a3746" stroke="#8fc0ea" stroke-width="1.2"/>
<path d="M301.1 804.1L306.6 809.6" stroke="#f2f2f2" stroke-width="2.4" stroke-linecap="round"/><circle cx="297.5" cy="800.5" r="5.2" fill="#a8cdf0" stroke="#f2f2f2" stroke-width="1.4"/>
<path d="M320.5 798V790.5H327M337 790.5H343.5V798M343.5 806V813.5H337M327 813.5H320.5V806" stroke="#8fc0ea" stroke-width="1.2" fill="none"/>
<path d="M334.1 804.1L339.6 809.6" stroke="#f2f2f2" stroke-width="2.4" stroke-linecap="round"/><circle cx="330.5" cy="800.5" r="5.2" fill="#a8cdf0" stroke="#f2f2f2" stroke-width="1.4"/>
<path d="M366.9 803.4L371.9 808.4" stroke="#f2f2f2" stroke-width="2.4" stroke-linecap="round"/><circle cx="363.5" cy="800" r="4.8" fill="#a8cdf0" stroke="#f2f2f2" stroke-width="1.4"/><path d="M360.5 800H366.5M363.5 797V803" stroke="#fff" stroke-width="1.8"/>
<path d="M399.9 803.4L404.9 808.4" stroke="#f2f2f2" stroke-width="2.4" stroke-linecap="round"/><circle cx="396.5" cy="800" r="4.8" fill="#a8cdf0" stroke="#f2f2f2" stroke-width="1.4"/><path d="M393.5 800H399.5" stroke="#fff" stroke-width="1.8"/>
<rect x="419.5" y="790.5" width="23" height="23" rx="2" fill="url(#tsq)" stroke="#1b2633" stroke-width="0.8"/>
<rect x="449" y="787" width="31" height="30" fill="#4b5e74"/>
<path d="M464 790L473.5 795.5V806.5L464 812L454.5 806.5V795.5Z" fill="#5b8dc4" stroke="#2c4a6c" stroke-width="0.6"/>
<path d="M464 801V812M454.5 795.5L464 801L473.5 795.5" stroke="#3f6a98" stroke-width="1.2" fill="none"/>
<path d="M456 808.5L452 811" stroke="#f07a3a" stroke-width="1.6"/><path d="M472.5 806.5L476.5 809" stroke="#4ccc6a" stroke-width="1.6"/><path d="M464 790V786.5" stroke="#5aa0e0" stroke-width="1.2"/>
<path d="M486 791.5H508L507 812H487Z" fill="#9fb3c6" stroke="#1b2633" stroke-width="0.6"/><path d="M486.5 799.5H507.5M497 791.5V812" stroke="#7fb890" stroke-width="0.5"/><path d="M486.5 799.5H507.5" stroke="#d08060" stroke-width="0.4"/>
<rect x="515" y="787" width="30.5" height="30" fill="#4b5e74"/>
<text x="519.5" y="810" font-family="Liberation Sans" font-size="16.5" fill="#f2f2f2" stroke="#f2f2f2" stroke-width="0.3" letter-spacing="-1.2">1Å</text><path d="M519.5 812.5H540.5" stroke="#f2f2f2" stroke-width="1.5"/>
<ellipse cx="563" cy="806.5" rx="9" ry="4" fill="none" stroke="#f2f2f2" stroke-width="1.6"/><rect x="558.5" y="793.5" width="9" height="6" rx="1" fill="#8fc0ea"/><circle cx="563" cy="796.8" r="1.8" fill="#2e3c4f"/>
<rect x="587" y="794" width="12" height="9" rx="1" fill="#8fc0ea"/><circle cx="593" cy="798.5" r="2.5" fill="#666"/><rect x="595.5" y="800.5" width="11" height="11.5" fill="#8fc0ea" stroke="#1b2633" stroke-width="0.6"/><rect x="597.5" y="806" width="7" height="5.5" fill="#ece8d8"/>
<rect x="614" y="787" width="31" height="30" fill="#4b5e74"/>
<rect x="626.5" y="791.5" width="12.5" height="13" fill="#8fc0ea"/><path d="M628.5 795H637M628.5 798H637M628.5 801H637" stroke="#4a7ab0" stroke-width="0.9"/><path d="M626.5 804.5L621.5 810" stroke="#f2f2f2" stroke-width="1"/><circle cx="621.5" cy="810.5" r="2.8" fill="#d0d0d0"/>
<rect x="652" y="792.5" width="20" height="18.5" fill="#8fc0ea" stroke="#1b2633" stroke-width="0.6"/><path d="M653 796H671M653 804.5H671M653 807.5H671" stroke="#4a7ab0" stroke-width="0.9"/>
<path d="M685 801.5Q695 792 705 801.5Q695 811 685 801.5Z" fill="#e8eef4"/><circle cx="695" cy="801.5" r="3.3" fill="#2e3c4f"/><circle cx="695" cy="801.5" r="1.6" fill="#e8eef4"/>
<path d="M720 794.5L725 799.5M720 794.5H724M720 794.5V798.5M736.5 794.5L731.5 799.5M736.5 794.5H732.5M736.5 794.5V798.5M720 809L725 804M720 809H724M720 809V805M736.5 809L731.5 804M736.5 809H732.5M736.5 809V805" stroke="#a9d0f4" stroke-width="2"/>
<path d="M754 794.5V809L767.5 801.7Z" fill="#fff" stroke="#111" stroke-width="0.8"/>
<path d="M69 688.7L74.7 679.3L80.4 688.7Z" fill="#6b93bd"/>
<path d="M74.7 819L69 809.6H80.4Z" fill="#6b93bd"/>
<path d="M4.5 749L14 743.5V755Z" fill="#6b93bd"/>
<path d="M143.7 749L134.5 743.5V755Z" fill="#6b93bd"/>
<path d="M56 685Q42 688 33 697" stroke="#6b93bd" stroke-width="3.2" fill="none"/><path d="M26.5 703.5L29.5 692L38 700.5Z" fill="#6b93bd"/>
<path d="M91.5 685Q105.5 688 114.5 697" stroke="#6b93bd" stroke-width="3.2" fill="none"/><path d="M121.5 703.5L110.5 700.5L118.5 692Z" fill="#6b93bd"/>
<g transform="translate(75 749.5) rotate(-17) scale(0.92)">
<path d="M-25 -34H25L34 -25V25L25 34H-25L-34 25V-25Z" fill="#4a7099"/>
<path d="M-24 -34H24L20 -28H-20Z" fill="#6c9fd6"/>
<path d="M-24 34H24L20 28H-20Z" fill="#6c9fd6"/>
<path d="M-34 -22V22L-28 19V-19Z" fill="#3f6389"/>
<path d="M34 -22V22L28 19V-19Z" fill="#3b5e85"/>
<path d="M-34 -25L-25 -34L-19 -28L-28 -19Z" fill="#6fa5de"/>
<path d="M34 -25L25 -34L19 -28L28 -19Z" fill="#43678f"/>
<path d="M-34 25L-25 34L-19 28L-28 19Z" fill="#41658c"/>
<path d="M34 25L25 34L19 28L28 19Z" fill="#4a729c"/>
<path d="M-19 -27H19L27 -19V19L19 27H-19L-27 19V-19Z" fill="#5b8bbd" stroke="#9cc2ea" stroke-width="1"/>
<path d="M8 -27H19L27 -19V-8L17 -14Z" fill="#5683b3"/>
</g>
<path d="M63 756L67.5 758.5L72 759" stroke="#4a90e8" stroke-width="2.2" fill="none"/>
<path d="M65.5 718L62 700" stroke="#3cb848" stroke-width="2.6"/><path d="M56.5 705L61 697.5L67 703.5Z" fill="#3cb848"/>
<path d="M106 742L118 738" stroke="#f08040" stroke-width="2.6"/><path d="M115.5 733L125.5 736.5L118.5 743Z" fill="#f08040"/>
<rect x="851.5" y="773.5" width="160" height="3.5" rx="1.5" fill="#fff" stroke="#333" stroke-width="0.9"/>
<text x="900.5" y="754.4" font-family="Liberation Sans" font-weight="700" font-size="26.5" fill="#fff" stroke="#3a3a3a" stroke-width="1.6" paint-order="stroke">1 nm</text>
</svg>
<svg class="a" style="left:0;top:0" width="1609" height="824" viewBox="0 0 1609 824">
<defs>
<radialGradient id="pv" cx="0.4" cy="0.35" r="0.7"><stop offset="0" stop-color="#b3cbe8"/><stop offset="1" stop-color="#7f9fc8"/></radialGradient>
</defs>
<path d="M1069.3 15.7L1074.3 20.6L1071 26.9M1074.3 20.6H1084.2L1088.7 26.3M1084.2 20.2L1087.3 10.9L1084 5M1087.3 10.9L1092.9 7.5" stroke="#a8d0f4" stroke-width="1" fill="none"/>
<circle cx="1074.3" cy="20.6" r="2.8" fill="#a9d0f5" stroke="#111" stroke-width="0.9"/>
<circle cx="1084.2" cy="20.2" r="2.8" fill="#a9d0f5" stroke="#111" stroke-width="0.9"/>
<circle cx="1087.3" cy="10.9" r="2.8" fill="#a9d0f5" stroke="#111" stroke-width="0.9"/>
<circle cx="1069.3" cy="15.7" r="1.9" fill="#fafafa" stroke="#111" stroke-width="0.8"/>
<circle cx="1071" cy="26.9" r="1.9" fill="#fafafa" stroke="#111" stroke-width="0.8"/>
<circle cx="1084" cy="5" r="1.9" fill="#fafafa" stroke="#111" stroke-width="0.8"/>
<circle cx="1092.9" cy="7.5" r="1.9" fill="#fafafa" stroke="#111" stroke-width="0.8"/>
<circle cx="1088.7" cy="26.3" r="1.9" fill="#fafafa" stroke="#111" stroke-width="0.8"/>
<text x="1550" y="21" font-family="Liberation Sans" font-weight="700" font-size="14" fill="#7ea6d2" stroke="#18222e" stroke-width="1.2" paint-order="stroke">?</text>
<path d="M1566 15.5H1573.5" stroke="#18222e" stroke-width="2.6" stroke-linecap="round"/><path d="M1573 10.5V20.5M1574 12H1579.5V19H1574Z" stroke="#18222e" stroke-width="2.2" fill="#18222e"/>
<path d="M1566 15.5H1573.5" stroke="#7ea6d2" stroke-width="1.2" stroke-linecap="round"/><path d="M1573.5 10.8V20.2M1574 12H1579.2V19H1574Z" stroke="#7ea6d2" stroke-width="1" fill="#7ea6d2"/>
<path d="M1585 9.5L1596.5 21M1596.5 9.5L1585 21" stroke="#18222e" stroke-width="2.6"/><path d="M1585 9.5L1596.5 21M1596.5 9.5L1585 21" stroke="#7ea6d2" stroke-width="1.2"/>
<path d="M1167.7 53V46.3H1172.5L1174.3 48V53Z" fill="#a8d0f5" stroke="#1a2a3a" stroke-width="0.6"/>
<path d="M1166 50.5H1167.6V53.2H1174.6V50.5H1176.2V57.6H1166Z" fill="#ececec" stroke="#1a2a3a" stroke-width="0.6"/>
<rect x="1427.5" y="45.8" width="11.5" height="11.5" fill="#5e6670" stroke="#1a2a3a" stroke-width="0.6"/><rect x="1429" y="51.5" width="8.5" height="5.5" fill="#ecebdf"/><rect x="1435.6" y="46.5" width="3" height="10.5" fill="#9ec8f0"/><rect x="1430" y="46.5" width="2.2" height="3.6" fill="#e8e8e0"/>
<path d="M1097.3 127.69999999999999L1101.5 132.2L1097.3 136.7" stroke="#8a8a8a" stroke-width="1.3" fill="none"/>
<path d="M1097.3 152.7L1101.5 157.2L1097.3 161.7" stroke="#8a8a8a" stroke-width="1.3" fill="none"/>
<path d="M1097.3 177.7L1101.5 182.2L1097.3 186.7" stroke="#8a8a8a" stroke-width="1.3" fill="none"/>
<path d="M1095.3 205.2L1099.5 209.39999999999998L1103.7 205.2" stroke="#333" stroke-width="1.4" fill="none"/>
<circle cx="1121" cy="132.2" r="8.2" fill="url(#pv)" stroke="#3a3e44" stroke-width="1.3"/><text x="1121" y="137.2" text-anchor="middle" font-family="Liberation Sans" font-weight="700" font-size="14" fill="#fff" stroke="#2a2a2a" stroke-width="1.6" paint-order="stroke">V</text>
<circle cx="1121" cy="157.2" r="8.2" fill="url(#pv)" stroke="#3a3e44" stroke-width="1.3"/><text x="1121" y="162.2" text-anchor="middle" font-family="Liberation Sans" font-weight="700" font-size="14" fill="#fff" stroke="#2a2a2a" stroke-width="1.6" paint-order="stroke">V</text>
<circle cx="1121" cy="182.2" r="8.2" fill="url(#pv)" stroke="#3a3e44" stroke-width="1.3"/><text x="1121" y="187.2" text-anchor="middle" font-family="Liberation Sans" font-weight="700" font-size="14" fill="#fff" stroke="#2a2a2a" stroke-width="1.6" paint-order="stroke">V</text>
<circle cx="1121" cy="207.2" r="8.2" fill="url(#pv)" stroke="#3a3e44" stroke-width="1.3"/><text x="1121" y="212.2" text-anchor="middle" font-family="Liberation Sans" font-weight="700" font-size="14" fill="#fff" stroke="#2a2a2a" stroke-width="1.6" paint-order="stroke">V</text>
<circle cx="1342.3" cy="257" r="8.2" fill="url(#pv)" stroke="#3a3e44" stroke-width="1.3"/><text x="1342.3" y="262" text-anchor="middle" font-family="Liberation Sans" font-weight="700" font-size="14" fill="#fff" stroke="#2a2a2a" stroke-width="1.6" paint-order="stroke">S</text>
<circle cx="1368" cy="257" r="8.2" fill="url(#pv)" stroke="#3a3e44" stroke-width="1.3"/><text x="1368" y="262" text-anchor="middle" font-family="Liberation Sans" font-weight="700" font-size="14" fill="#fff" stroke="#2a2a2a" stroke-width="1.6" paint-order="stroke">V</text>
<circle cx="1394" cy="257" r="8.2" fill="url(#pv)" stroke="#3a3e44" stroke-width="1.3"/><text x="1394" y="262" text-anchor="middle" font-family="Liberation Sans" font-weight="700" font-size="14" fill="#fff" stroke="#2a2a2a" stroke-width="1.6" paint-order="stroke">P</text>
<circle cx="1342.3" cy="282" r="8.2" fill="url(#pv)" stroke="#3a3e44" stroke-width="1.3"/><text x="1342.3" y="287" text-anchor="middle" font-family="Liberation Sans" font-weight="700" font-size="14" fill="#fff" stroke="#2a2a2a" stroke-width="1.6" paint-order="stroke">S</text>
<circle cx="1368" cy="282" r="8.2" fill="url(#pv)" stroke="#3a3e44" stroke-width="1.3"/><text x="1368" y="287" text-anchor="middle" font-family="Liberation Sans" font-weight="700" font-size="14" fill="#fff" stroke="#2a2a2a" stroke-width="1.6" paint-order="stroke">V</text>
<circle cx="1394" cy="282" r="8.2" fill="url(#pv)" stroke="#3a3e44" stroke-width="1.3"/><text x="1394" y="287" text-anchor="middle" font-family="Liberation Sans" font-weight="700" font-size="14" fill="#fff" stroke="#2a2a2a" stroke-width="1.6" paint-order="stroke">P</text>
<rect x="1564" y="96" width="20" height="214" fill="#1f2b39"/>
<rect x="1565" y="97" width="18" height="18" fill="#4e7db0"/>
<rect x="1565" y="116.5" width="18" height="125.5" fill="#4e7db0"/>
<rect x="1565" y="291" width="18" height="18" fill="#4e7db0"/>
<path d="M1568.8 109.5H1579.2L1574 101.5Z" fill="#fff"/>
<path d="M1568.8 296H1579.2L1574 304Z" fill="#fff"/>
<circle cx="1290.7" cy="327.2" r="8.4" fill="none" stroke="#b5d5f2" stroke-width="1.1"/><circle cx="1290.7" cy="323.09999999999997" r="1.1" fill="#b5d5f2"/><rect x="1289.8" y="325.4" width="1.8" height="7" fill="#b5d5f2"/>
<circle cx="1213.8" cy="613" r="8.4" fill="none" stroke="#b5d5f2" stroke-width="1.1"/><circle cx="1213.8" cy="608.9" r="1.1" fill="#b5d5f2"/><rect x="1212.8999999999999" y="611.2" width="1.8" height="7" fill="#b5d5f2"/>
<circle cx="1573.8" cy="680" r="8.4" fill="none" stroke="#b5d5f2" stroke-width="1.1"/><circle cx="1573.8" cy="675.9" r="1.1" fill="#b5d5f2"/><rect x="1572.8999999999999" y="678.2" width="1.8" height="7" fill="#b5d5f2"/>
<path d="M1543.2 675.2L1552.8 684.8M1552.8 675.2L1543.2 684.8" stroke="#0d0d0d" stroke-width="5" stroke-linecap="round"/>
<path d="M1543.2 675.2L1552.8 684.8M1552.8 675.2L1543.2 684.8" stroke="#9ab8e0" stroke-width="3.2" stroke-linecap="round"/>
<path d="M1094.5 730L1098 734L1104.5 725" stroke="#4b7bb1" stroke-width="1.8" fill="none"/>
<path d="M1284.2 753.2V763.8L1291.2 758.5Z" fill="#fff" stroke="#111" stroke-width="0.8"/>
</svg>
<svg class="a" style="left:0;top:0" width="1609" height="824" viewBox="0 0 1609 824">
<defs>
<radialGradient id="sb" cx="0.4" cy="0.3" r="0.75"><stop offset="0" stop-color="#f4faff"/><stop offset="0.45" stop-color="#b9d6f2"/><stop offset="1" stop-color="#7fa7cf"/></radialGradient>
<radialGradient id="sg" cx="0.4" cy="0.3" r="0.75"><stop offset="0" stop-color="#a0a6ae"/><stop offset="1" stop-color="#6b727c"/></radialGradient>
<linearGradient id="yb" x1="0" y1="0" x2="0" y2="1"><stop offset="0" stop-color="#f0e840"/><stop offset="1" stop-color="#c9bd1c"/></linearGradient>
<linearGradient id="sq" x1="0" y1="0" x2="0" y2="1"><stop offset="0" stop-color="#5a7590"/><stop offset="1" stop-color="#8fb5dc"/></linearGradient>
</defs>
<circle cx="102.9" cy="19.7" r="4.6" fill="#d8d8d8" stroke="#555" stroke-width="1"/>
<path d="M106 26L110.5 22" stroke="#46505c" stroke-width="3.6" stroke-linecap="round"/><path d="M106.5 25.5L110 22.5" stroke="#8fc2f0" stroke-width="1"/>
<path d="M280 17.5H292.5L286.2 27.8Z" fill="#4c7bb0"/>
<path d="M313.2 19.3V10.5H322.0M328.0 10.5H336.8V19.3M336.8 24.7V33.5H328.0M322.0 33.5H313.2V24.7" stroke="#a9d2f4" stroke-width="1.4" fill="none"/>
<circle cx="321.1" cy="17.6" r="4.3" fill="url(#sb)" stroke="#1b2633" stroke-width="0.8"/>
<circle cx="329.4" cy="21.8" r="4.3" fill="url(#sb)" stroke="#1b2633" stroke-width="0.8"/>
<circle cx="321.7" cy="26.6" r="4.3" fill="url(#sb)" stroke="#1b2633" stroke-width="0.8"/>
<path d="M346.2 19.3V10.5H355.0M361.0 10.5H369.8V19.3M369.8 24.7V33.5H361.0M355.0 33.5H346.2V24.7" stroke="#7b838e" stroke-width="1.4" fill="none"/>
<path d="M353.2 17.3L362.6 26.7M362.6 17.3L353.2 26.7" stroke="#7b838e" stroke-width="3"/>
<path d="M379.2 19.3V10.5H388.0M394.0 10.5H402.8V19.3M402.8 24.7V33.5H394.0M388.0 33.5H379.2V24.7" stroke="#7b838e" stroke-width="1.4" fill="none"/>
<path d="M391 14.8L398 22.2H394.2V29H387.8V22.2H384Z" fill="#7b838e"/>
<path d="M412 19.3V10.5H420.8M426.8 10.5H435.6V19.3M435.6 24.7V33.5H426.8M420.8 33.5H412V24.7" stroke="#7b838e" stroke-width="1.4" fill="none"/>
<path d="M417.3 15.7L421.7 21.7L430.5 16M421.7 21.7L427.4 27.5" stroke="#7b838e" stroke-width="1.2" fill="none"/>
<circle cx="421.7" cy="21.7" r="3.4" fill="#7b838e"/><circle cx="417.3" cy="15.7" r="1.8" fill="#7b838e"/><circle cx="430.5" cy="16" r="2" fill="#7b838e"/><circle cx="427.4" cy="27.5" r="2.6" fill="#7b838e"/>
<path d="M445.2 19.3V10.5H454.0M460.0 10.5H468.8V19.3M468.8 24.7V33.5H460.0M454.0 33.5H445.2V24.7" stroke="#7b838e" stroke-width="1.4" fill="none"/>
<path d="M449.8 19.5Q453 17 457 18.5T464.2 18M449.8 25.5Q453 23 457 24.5T464.2 24" stroke="#7b838e" stroke-width="1.8" fill="none"/>
<path d="M478.2 19.3V10.5H487.0M493.0 10.5H501.8V19.3M501.8 24.7V33.5H493.0M487.0 33.5H478.2V24.7" stroke="#7b838e" stroke-width="1.4" fill="none"/>
<circle cx="487" cy="17.5" r="3.8" fill="#7b838e"/><circle cx="493.5" cy="17.5" r="3" fill="#7b838e"/><circle cx="484.8" cy="24.5" r="4.3" fill="#7b838e"/><circle cx="490.5" cy="24" r="4" fill="#6f7781" stroke="#2e3c4f" stroke-width="0.6"/>
<path d="M494 22.5V31M489.8 26.8H498.2" stroke="#7b838e" stroke-width="2"/>
<path d="M525.5 24.5L531 30" stroke="#f0f0f0" stroke-width="2.6" stroke-linecap="round"/>
<circle cx="521.5" cy="20.5" r="5.6" fill="#a8cdf0" stroke="#f2f2f2" stroke-width="1.5"/>
<circle cx="719" cy="22.9" r="9.8" fill="none" stroke="#8fc0e8" stroke-width="1.1"/><circle cx="719" cy="22.9" r="8.2" fill="none" stroke="#8fc0e8" stroke-width="0.6"/>
<path d="M719 16V22.9M719 22.9L713 26.5M719 22.9L725 26.5M713.5 28.5H724.5M713 18.5L715.5 21M725 18.5L722.5 21" stroke="#8fc0e8" stroke-width="0.9"/>
<circle cx="742" cy="14.9" r="3.5999999999999996" fill="#141c26"/>
<circle cx="750.5" cy="18.1" r="4.2" fill="#141c26"/>
<circle cx="759.4" cy="13.7" r="3.5999999999999996" fill="#141c26"/>
<circle cx="745.2" cy="27.4" r="5.6000000000000005" fill="#141c26"/>
<path d="M742 14.9L750.5 18.1L759.4 13.7M750.5 18.1L745.2 27.4" stroke="#9ac4ea" stroke-width="1.6" fill="none"/>
<circle cx="742" cy="14.9" r="2.9" fill="url(#sb)"/>
<circle cx="750.5" cy="18.1" r="3.5" fill="url(#sb)"/>
<circle cx="759.4" cy="13.7" r="2.9" fill="url(#sb)"/>
<circle cx="745.2" cy="27.4" r="4.9" fill="url(#sb)"/>
<path d="M757.3 22.2V31.8M752.5 27H762" stroke="#ffffff" stroke-width="2.6"/>
<path d="M777.8 28L781 14.5M786.3 28L791 14.5" stroke="#4a5868" stroke-width="5.4" stroke-linecap="round"/>
<path d="M778.3 25.5L781 15.5M786.8 25.5L790.6 15.5" stroke="#a9d0f2" stroke-width="3.2"/><path d="M787.6 25.5L791.3 15.5" stroke="#4a5868" stroke-width="0.6"/>
<circle cx="809" cy="27.4" r="5.2" fill="url(#sb)" stroke="#1b2633" stroke-width="0.7"/>
<text x="810.5" y="19.8" font-family="Liberation Sans" font-weight="700" font-size="11.5" fill="#eef4fa">2</text><text x="818" y="18.5" font-family="Liberation Sans" font-size="10" fill="#eef4fa">+</text>
<text x="835.5" y="27.8" font-family="Liberation Sans" font-weight="700" font-size="16" fill="#dcecfb" letter-spacing="-0.5">+H</text>
<text x="867.5" y="27.8" font-family="Liberation Sans" font-weight="700" font-size="16" fill="#dcecfb" letter-spacing="-0.5">−H</text>
<text x="904" y="27.8" font-family="Liberation Sans" font-weight="700" font-size="16" fill="#dcecfb">H</text>
<path d="M909.5 29Q916 22.5 922.5 29Q916 35.5 909.5 29Z" fill="#7f95ab" stroke="#1f2a36" stroke-width="1"/><circle cx="916" cy="29" r="2.4" fill="#2e3c4f"/><circle cx="916" cy="29" r="1" fill="#7f95ab"/>
<rect x="928" y="7.2" width="30" height="29.5" fill="#4b5e74"/>
<path d="M931.5 21Q935 21 938.5 25.5Q943 31.5 947.5 25.5Q951 21 954.5 21" stroke="#8cc4ee" stroke-width="1.3" fill="none"/>
<path d="M936.5 14.5Q941.5 13.5 942.5 19" stroke="#f4f4f4" stroke-width="1.6" fill="none"/><path d="M939.5 18.5H945.5L942.5 23Z" fill="#f4f4f4"/>
<path d="M975 11.5C979.5 11.5 981 15.5 979.5 20.5C985 21.5 987 26 984.5 29.5C982 32.5 977 31.5 975 28.5C972 32 966 32.5 964.5 28C963 24 966.5 21 970.5 20.5C969 15.5 970.5 11.5 975 11.5Z" fill="none" stroke="#0e0e0e" stroke-width="3"/><path d="M975 11.5C979.5 11.5 981 15.5 979.5 20.5C985 21.5 987 26 984.5 29.5C982 32.5 977 31.5 975 28.5C972 32 966 32.5 964.5 28C963 24 966.5 21 970.5 20.5C969 15.5 970.5 11.5 975 11.5Z" fill="url(#yb)" stroke="#f5f5e8" stroke-width="1.3"/>
<path d="M979 22.5V32M974.5 27.2H983.5" stroke="#111" stroke-width="4.2"/><path d="M979 22.5V32M974.5 27.2H983.5" stroke="#ffffff" stroke-width="2.4"/>
<g transform="translate(997 10.5) scale(0.72) translate(-964 -11)"><path d="M975 11.5C979.5 11.5 981 15.5 979.5 20.5C985 21.5 987 26 984.5 29.5C982 32.5 977 31.5 975 28.5C972 32 966 32.5 964.5 28C963 24 966.5 21 970.5 20.5C969 15.5 970.5 11.5 975 11.5Z" fill="none" stroke="#0e0e0e" stroke-width="3.6"/><path d="M975 11.5C979.5 11.5 981 15.5 979.5 20.5C985 21.5 987 26 984.5 29.5C982 32.5 977 31.5 975 28.5C972 32 966 32.5 964.5 28C963 24 966.5 21 970.5 20.5C969 15.5 970.5 11.5 975 11.5Z" fill="url(#yb)" stroke="#f5f5e8" stroke-width="1.6"/></g>
<g transform="translate(999.6 13.1) scale(0.72) translate(-964 -11)"><path d="M975 11.5C979.5 11.5 981 15.5 979.5 20.5C985 21.5 987 26 984.5 29.5C982 32.5 977 31.5 975 28.5C972 32 966 32.5 964.5 28C963 24 966.5 21 970.5 20.5C969 15.5 970.5 11.5 975 11.5Z" fill="none" stroke="#0e0e0e" stroke-width="3.6"/><path d="M975 11.5C979.5 11.5 981 15.5 979.5 20.5C985 21.5 987 26 984.5 29.5C982 32.5 977 31.5 975 28.5C972 32 966 32.5 964.5 28C963 24 966.5 21 970.5 20.5C969 15.5 970.5 11.5 975 11.5Z" fill="url(#yb)" stroke="#f5f5e8" stroke-width="1.6"/></g>
<g transform="translate(1002.2 15.7) scale(0.72) translate(-964 -11)"><path d="M975 11.5C979.5 11.5 981 15.5 979.5 20.5C985 21.5 987 26 984.5 29.5C982 32.5 977 31.5 975 28.5C972 32 966 32.5 964.5 28C963 24 966.5 21 970.5 20.5C969 15.5 970.5 11.5 975 11.5Z" fill="none" stroke="#0e0e0e" stroke-width="3.6"/><path d="M975 11.5C979.5 11.5 981 15.5 979.5 20.5C985 21.5 987 26 984.5 29.5C982 32.5 977 31.5 975 28.5C972 32 966 32.5 964.5 28C963 24 966.5 21 970.5 20.5C969 15.5 970.5 11.5 975 11.5Z" fill="url(#yb)" stroke="#f5f5e8" stroke-width="1.6"/></g>
<path d="M1013 24.5V34M1008.5 29.2H1017.5" stroke="#111" stroke-width="4.2"/><path d="M1013 24.5V34M1008.5 29.2H1017.5" stroke="#ffffff" stroke-width="2.4"/>
<path d="M1042.60 24.25L1042.60 26.75L1040.42 26.84L1039.90 28.27L1041.51 29.75L1039.90 31.67L1038.17 30.33L1036.85 31.09L1037.14 33.26L1034.67 33.70L1034.20 31.56L1032.71 31.30L1031.53 33.15L1029.36 31.89L1030.38 29.95L1029.40 28.79L1027.31 29.45L1026.46 27.09L1028.48 26.26L1028.48 24.74L1026.46 23.91L1027.31 21.55L1029.40 22.21L1030.38 21.05L1029.36 19.11L1031.53 17.85L1032.71 19.70L1034.20 19.44L1034.67 17.30L1037.14 17.74L1036.85 19.91L1038.17 20.67L1039.90 19.33L1041.51 21.25L1039.90 22.73L1040.42 24.16Z" fill="#ececec" stroke="#151515" stroke-width="0.6"/><circle cx="1034.5" cy="25.5" r="4.6" fill="none" stroke="#6aa0d8" stroke-width="1.4"/><circle cx="1034.5" cy="25.5" r="2.76" fill="#2e3c4f"/>
<path d="M1050.91 15.47L1050.91 17.53L1049.30 17.60L1048.82 18.76L1049.91 19.95L1048.45 21.41L1047.26 20.32L1046.10 20.80L1046.03 22.41L1043.97 22.41L1043.90 20.80L1042.74 20.32L1041.55 21.41L1040.09 19.95L1041.18 18.76L1040.70 17.60L1039.09 17.53L1039.09 15.47L1040.70 15.40L1041.18 14.24L1040.09 13.05L1041.55 11.59L1042.74 12.68L1043.90 12.20L1043.97 10.59L1046.03 10.59L1046.10 12.20L1047.26 12.68L1048.45 11.59L1049.91 13.05L1048.82 14.24L1049.30 15.40Z" fill="#ececec" stroke="#151515" stroke-width="0.6"/><circle cx="1045" cy="16.5" r="3.2" fill="none" stroke="#6aa0d8" stroke-width="1.4"/><circle cx="1045" cy="16.5" r="1.92" fill="#2e3c4f"/>
<path d="M1043.5 23V33M1038.5 28H1048.5" stroke="#111" stroke-width="4.2"/><path d="M1043.5 23V33M1038.5 28H1048.5" stroke="#ffffff" stroke-width="2.4"/>
</svg>
</body></html>
